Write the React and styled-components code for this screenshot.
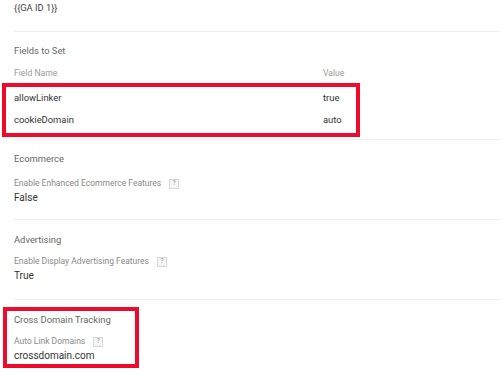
import { Fragment } from "react";
import styled, { createGlobalStyle } from "styled-components";

const GlobalStyle = createGlobalStyle`
  body {
    margin: 0;
    background: #fff;
    font-family: Roboto, "Liberation Sans", Arial, sans-serif;
  }
`;

const Page = styled.div`
  width: 500px;
  height: 372px;
  overflow: hidden;
  padding-left: 14px;
  box-sizing: border-box;
`;

const Section = styled.section`
  padding: ${(p) => p.$pad};
  border-bottom: ${(p) => (p.$last ? "none" : "1px solid #eeeeee")};
`;

const Plain = styled.div`
  font-size: 9.3px;
  line-height: 16px;
  color: #444;
`;

const SectionTitle = styled.div`
  font-size: 9.4px;
  line-height: 16px;
  color: #666;
  margin-bottom: ${(p) => p.$gap || "8px"};
`;

const Label = styled.div`
  display: flex;
  align-items: center;
  gap: 8px;
  font-size: 8.5px;
  line-height: 13px;
  color: #8a8a8a;
`;

const Value = styled.div`
  font-size: 10px;
  line-height: 15px;
  color: #333;
`;

const Help = styled.span`
  display: inline-flex;
  align-items: center;
  justify-content: center;
  width: 8px;
  height: 8px;
  border: 1px solid #d8d8d8;
  background: #f6f6f6;
  color: #9a9a9a;
  font-size: 7px;
  line-height: 1;
`;

const Highlight = styled.div`
  border: 4px solid #ee0a2a;
  margin: ${(p) => p.$margin};
  padding: ${(p) => p.$pad};
  width: ${(p) => p.$width};
  box-sizing: border-box;
`;

const Grid = styled.div`
  display: grid;
  grid-template-columns: 309px 1fr;
`;

const HeadCell = styled.div`
  font-size: 8.6px;
  line-height: 16px;
  color: #9a9a9a;
`;

const Cell = styled.div`
  font-size: 9.4px;
  line-height: 22px;
  color: #333;
`;

const fields = [
  ["allowLinker", "true"],
  ["cookieDomain", "auto"],
];

function Setting({ title, gap, label, value }) {
  return (
    <>
      <SectionTitle $gap={gap}>{title}</SectionTitle>
      <Label>
        {label}
        <Help>?</Help>
      </Label>
      <Value>{value}</Value>
    </>
  );
}

export default function App() {
  return (
    <Page>
      <GlobalStyle />
      <Section $pad="0 0 15px">
        <Plain>{"{{GA ID 1}}"}</Plain>
      </Section>
      <Section $pad="11px 0 2px">
        <SectionTitle $gap="6px">Fields to Set</SectionTitle>
        <Grid>
          <HeadCell>Field Name</HeadCell>
          <HeadCell>Value</HeadCell>
        </Grid>
        <Highlight $width="358px" $margin="2px 0 0 -12px" $pad="0 0 2px 8px">
          <Grid>
            {fields.map(([name, value]) => (
              <Fragment key={name}>
                <Cell>{name}</Cell>
                <Cell>{value}</Cell>
              </Fragment>
            ))}
          </Grid>
        </Highlight>
      </Section>
      <Section $pad="11px 0 14px">
        <Setting
          title="Ecommerce"
          gap="10px"
          label="Enable Enhanced Ecommerce Features"
          value="False"
        />
      </Section>
      <Section $pad="12px 0 16px">
        <Setting
          title="Advertising"
          gap="7px"
          label="Enable Display Advertising Features"
          value="True"
        />
      </Section>
      <Section $pad="7px 0 0" $last>
        <Highlight $width="136px" $margin="0 0 0 -11px" $pad="1px 0 1px 7px">
          <Setting
            title="Cross Domain Tracking"
            gap="7px"
            label="Auto Link Domains"
            value="crossdomain.com"
          />
        </Highlight>
      </Section>
    </Page>
  );
}
